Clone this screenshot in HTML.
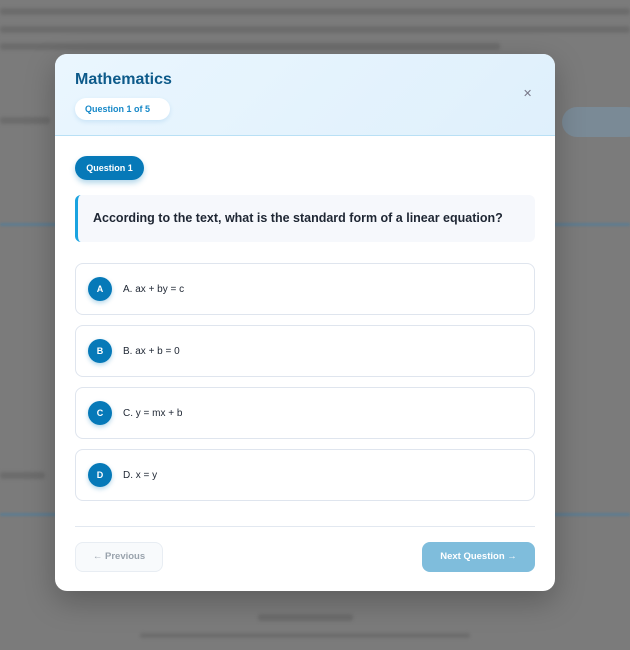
<!DOCTYPE html>
<html><head><style>
*{box-sizing:border-box;margin:0;padding:0}
body{width:630px;height:650px;overflow:hidden;background:#7b7b7b;font-family:"Liberation Sans",sans-serif;position:relative}
.bgt{position:absolute;left:0;height:7px;background:#6c6c6c;border-radius:3px;filter:blur(1.5px)}
.modal{position:absolute;left:55px;top:54px;width:500px;height:537px;background:#fff;border-radius:12px;overflow:hidden;box-shadow:0 10px 30px rgba(0,0,0,.25)}
.hdr{height:82px;background:linear-gradient(135deg,#eaf6fe,#dff0fc);border-bottom:1px solid #b9e0f5;position:relative}
.title{position:absolute;left:20px;top:17px;font-size:16px;font-weight:bold;color:#0d5a8a}
.pill{position:absolute;left:20px;top:44px;width:95px;height:22px;background:#fff;border-radius:11px;font-size:9px;color:#1688c8;font-weight:bold;line-height:22px;padding-left:10px;box-shadow:0 2px 5px rgba(80,160,220,.2)}
.x{position:absolute;left:468px;top:33px;font-size:11px;color:#778}
.badge{position:absolute;left:20px;top:102px;width:69px;height:24px;border-radius:12px;background:#0679b8;color:#fff;font-size:9px;font-weight:bold;line-height:24px;text-align:center;box-shadow:0 3px 6px rgba(6,121,184,.3)}
.q{position:absolute;left:20px;top:141px;width:460px;height:47px;background:#f6f8fc;border-left:3px solid #1aa3e0;border-radius:6px;font-size:12.5px;font-weight:bold;color:#1e2633;line-height:47px;padding-left:15px}
.opt{position:absolute;left:20px;width:460px;height:52px;border:1px solid #dfe5ee;border-radius:8px}
.c{position:absolute;left:12px;top:13px;width:24px;height:24px;border-radius:50%;background:#0679b8;color:#fff;font-size:9px;font-weight:bold;text-align:center;line-height:24px;box-shadow:0 2px 5px rgba(6,121,184,.3)}
.ot{position:absolute;left:47px;top:1px;line-height:50px;font-size:10px;color:#1e2633}
.div{position:absolute;left:20px;top:472px;width:460px;height:1px;background:#e2e8f0}
.prev{position:absolute;left:20px;top:488px;width:88px;height:30px;border:1px solid #e8edf3;background:#f8fafc;border-radius:8px;font-size:9.5px;color:#9aa3ad;text-align:center;line-height:28px;font-weight:bold}
.next{position:absolute;left:367px;top:488px;width:113px;height:30px;background:#7fbddc;border-radius:8px;font-size:9.5px;color:#fff;text-align:center;line-height:30px;font-weight:bold}
</style></head><body>
<div class="bgt" style="top:8px;width:630px"></div>
<div class="bgt" style="top:26px;width:630px"></div>
<div class="bgt" style="top:43px;width:500px"></div>
<div class="bgt" style="top:117px;width:50px"></div>
<div style="position:absolute;left:562px;top:107px;width:80px;height:30px;border-radius:15px;background:#7a8a96"></div>
<div style="position:absolute;left:0;top:223px;width:630px;height:3px;background:#5d7c90;filter:blur(1px)"></div>
<div style="position:absolute;left:0;top:513px;width:630px;height:3px;background:#5d7c90;filter:blur(1px)"></div>
<div class="bgt" style="top:472px;width:45px"></div>
<div class="bgt" style="top:614px;left:258px;width:95px"></div>
<div class="bgt" style="top:633px;left:140px;width:330px;height:5px"></div>
<div class="modal">
<div class="hdr"><div class="title">Mathematics</div><div class="pill">Question 1 of 5</div><div class="x">✕</div></div>
<div class="badge">Question 1</div>
<div class="q">According to the text, what is the standard form of a linear equation?</div>
<div class="opt" style="top:209px"><div class="c">A</div><div class="ot">A. ax + by = c</div></div>
<div class="opt" style="top:271px"><div class="c">B</div><div class="ot">B. ax + b = 0</div></div>
<div class="opt" style="top:333px"><div class="c">C</div><div class="ot">C. y = mx + b</div></div>
<div class="opt" style="top:395px"><div class="c">D</div><div class="ot">D. x = y</div></div>
<div class="div"></div>
<div class="prev">← Previous</div>
<div class="next">Next Question →</div>
</div>
</body></html>
